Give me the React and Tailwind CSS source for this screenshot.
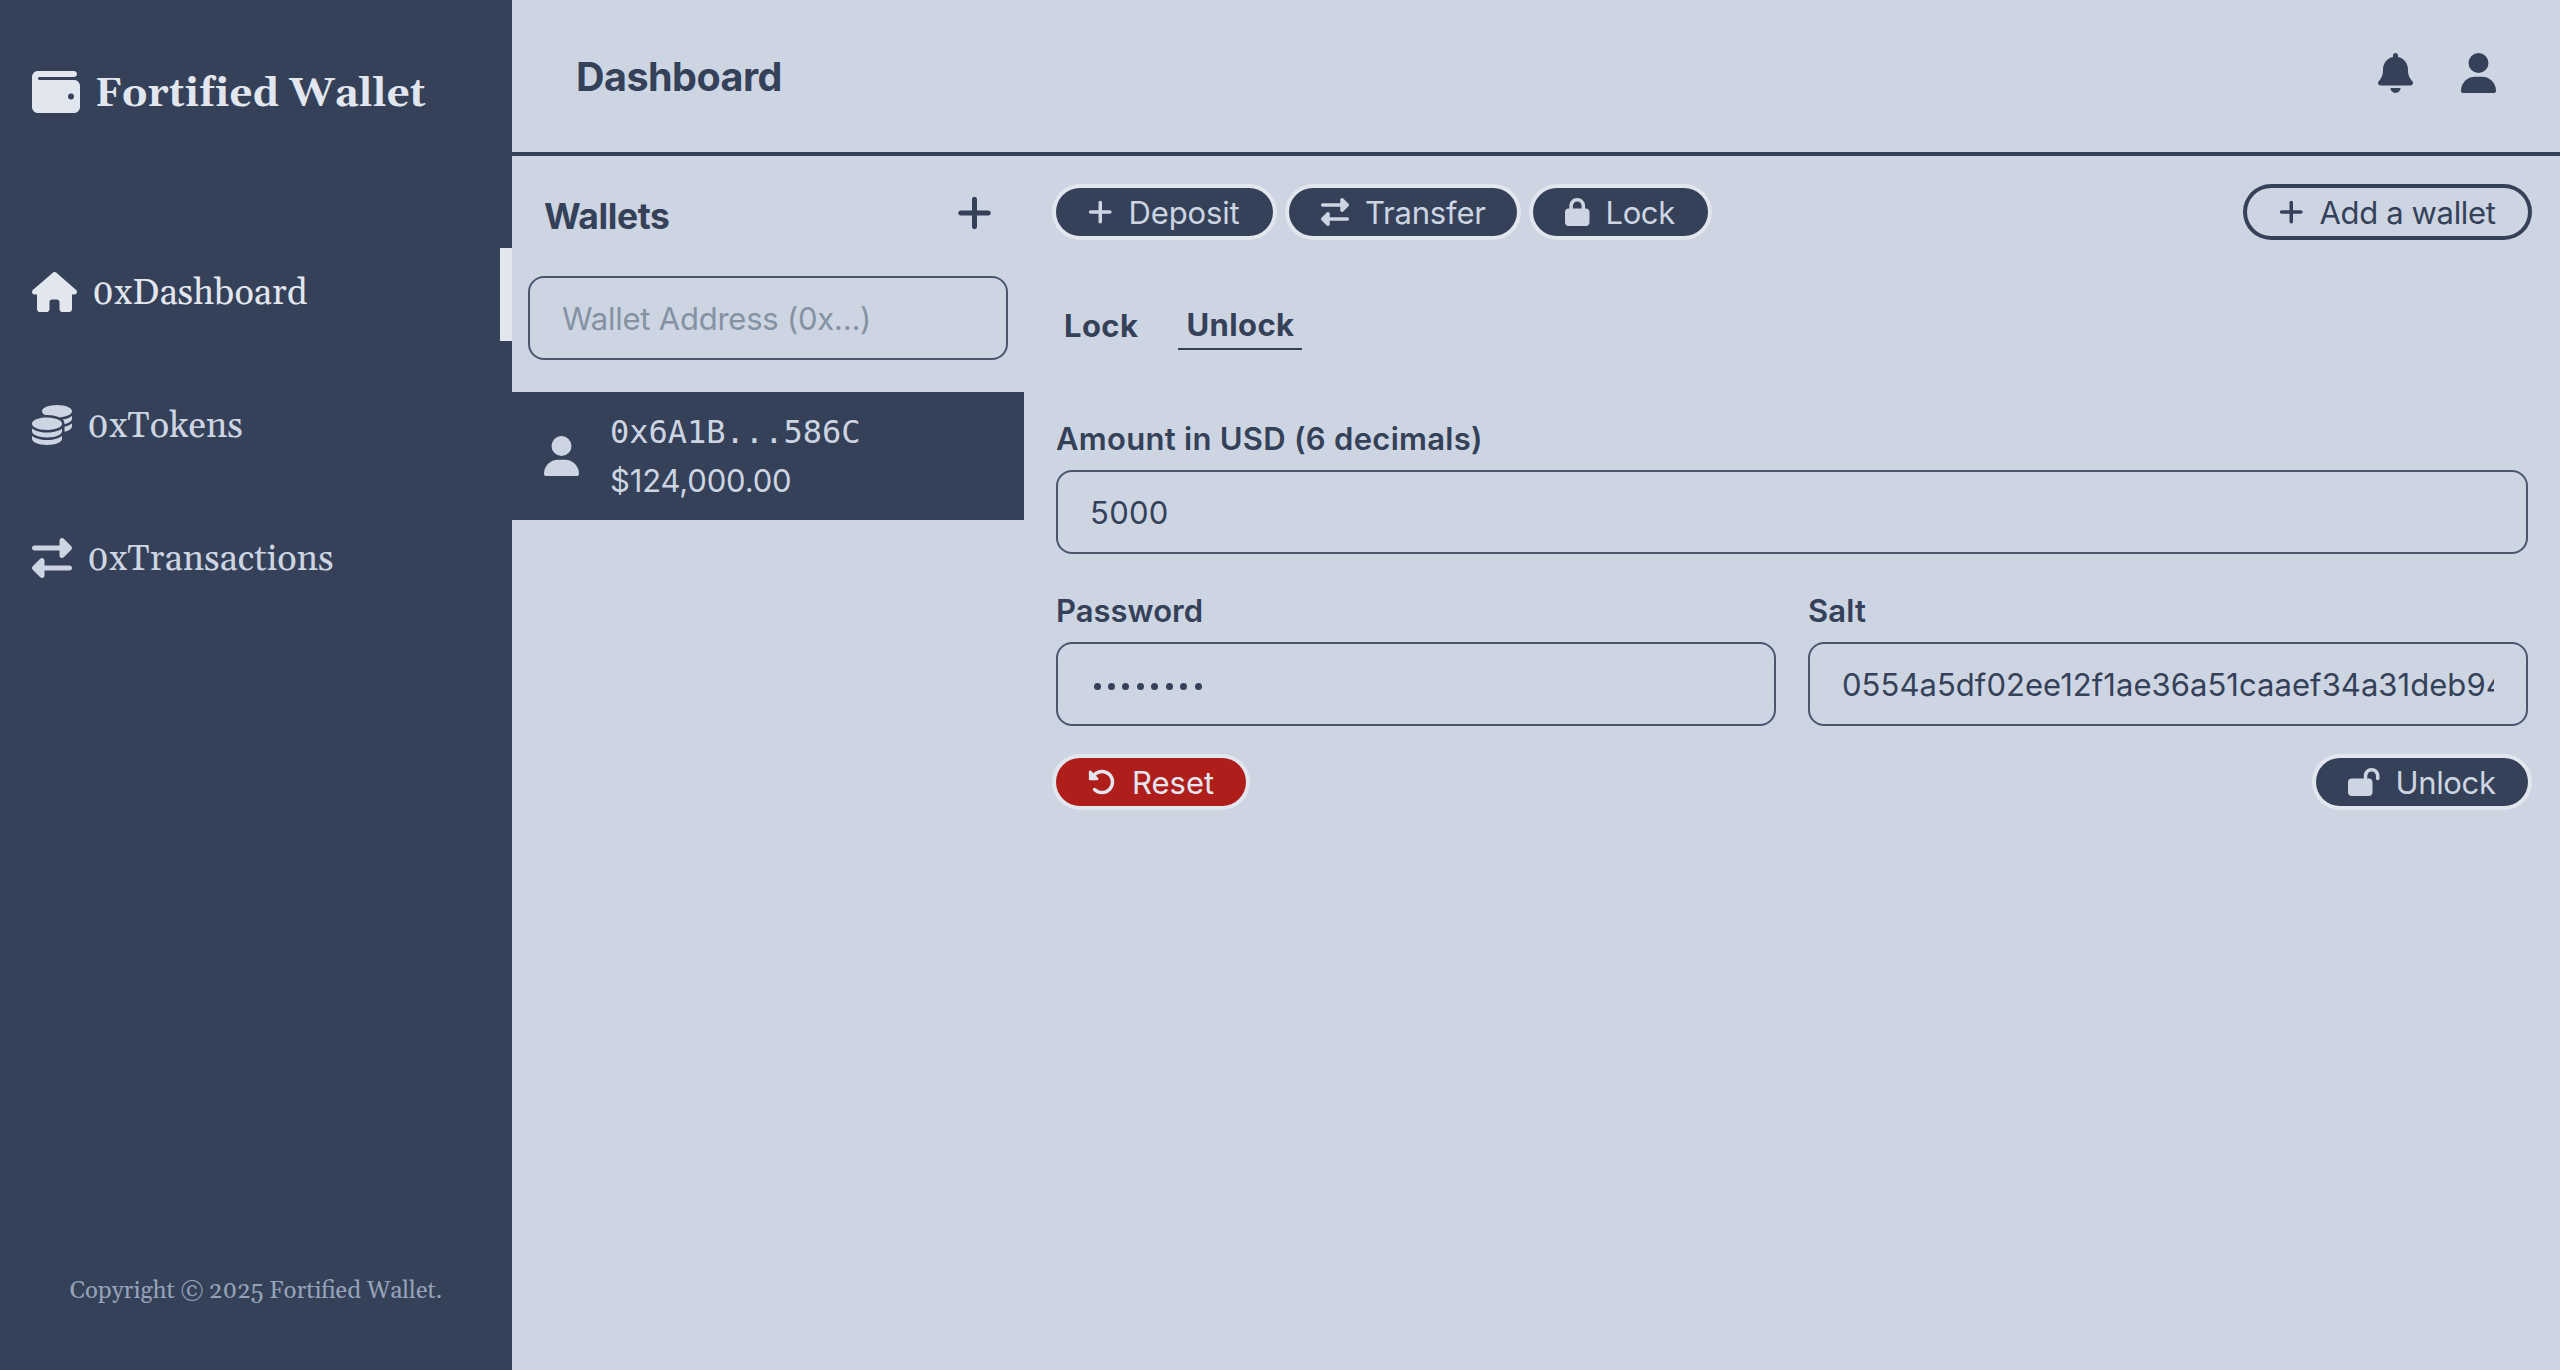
import {
  FaBell,
  FaCoins,
  FaHouse,
  FaLock,
  FaLockOpen,
  FaPlus,
  FaRightLeft,
  FaRotateLeft,
  FaUser,
  FaWallet,
} from "react-icons/fa6";

function NavItem({ icon: Icon, label, active }) {
  return (
    <a
      className={`flex h-[93px] items-center gap-[15px] pb-[5px] pl-8 ${
        active
          ? "border-r-12 border-[#e2e6ef] text-[#e2e6ef]"
          : "text-[#cdd5e2]"
      }`}
    >
      <Icon className={active ? "h-10 w-[45px]" : "size-10"} />
      <span className="pt-[3px] text-[36px] leading-[56px] tracking-[0.05px]">{label}</span>
    </a>
  );
}

function Sidebar() {
  return (
    <aside className="flex w-[512px] shrink-0 flex-col bg-[#354158] font-['Gelasio','Georgia','Liberation_Serif',serif] oldstyle-nums">
      <div className="flex h-[184px] items-center gap-[15px] pl-8 text-[#e2e6ef]">
        <FaWallet className="size-12" />
        <span className="pt-[5px] text-[40px] leading-[56px] font-bold tracking-[0.2px]">Fortified Wallet</span>
      </div>
      <nav className="mt-16 flex flex-col gap-10">
        <NavItem icon={FaHouse} label="0xDashboard" active />
        <NavItem icon={FaCoins} label="0xTokens" />
        <NavItem icon={FaRightLeft} label="0xTransactions" />
      </nav>
      <p className="mt-auto mb-[63px] text-center text-[24px] leading-8 text-[#95a3b9]">
        Copyright © 2025 Fortified Wallet.
      </p>
    </aside>
  );
}

const tones = {
  dark: "bg-[#354158] text-[#cdd5e2] ring-[#e2e6ef]",
  danger: "bg-[#b01e1c] text-[#e2e6ef] ring-[#e2e6ef]",
  outline: "text-[#354158] ring-[#354158]",
};

function Pill({ icon: Icon, iconClass = "w-[24.5px]", tone = "dark", size = "", track = "tracking-[-0.15px]", children }) {
  return (
    <button className={`flex h-12 items-center gap-4 rounded-full px-8 text-[31px] ring-4 ${size} ${track} ${tones[tone]}`}>
      <Icon className={`h-7 shrink-0 ${iconClass}`} />
      <span className="pt-0.5 leading-[44px] whitespace-nowrap">{children}</span>
    </button>
  );
}

function Field({ label, track, children }) {
  return (
    <label className="flex min-w-0 flex-1 flex-col gap-2">
      <span className={`h-12 pt-px text-[31px] leading-[48px] font-semibold ${track}`}>{label}</span>
      <div className="flex h-[84px] items-center rounded-2xl border-2 border-[#4a566e] px-8 text-[31px]">
        {children}
      </div>
    </label>
  );
}

function WalletList() {
  return (
    <section className="w-[512px] shrink-0">
      <div className="flex h-[120px] items-center justify-between px-8">
        <h2 className="pt-0.5 text-[35.5px] font-bold tracking-[-0.42px]">Wallets</h2>
        <FaPlus className="mb-1.5 h-10 w-[35px]" />
      </div>
      <div className="mx-4 flex h-[84px] items-center rounded-2xl border-2 border-[#4a566e] px-8 pt-0.5 text-[31px] tracking-[-0.23px] text-[#8592a3]">
        Wallet Address (0x...)
      </div>
      <div className="mt-8 flex h-32 items-center gap-[31px] bg-[#354158] px-8 text-[#cdd5e2]">
        <FaUser className="h-10 w-[35px]" />
        <div className="leading-[48px]">
          <p className="font-['DejaVu_Sans_Mono',monospace] text-[32px]">0x6A1B...586C</p>
          <p className="h-12 pt-px text-[31px] tracking-[-0.16px]">$124,000.00</p>
        </div>
      </div>
    </section>
  );
}

function UnlockPanel() {
  return (
    <section className="flex min-w-0 flex-1 flex-col p-8">
      <div className="flex gap-4">
        <Pill icon={FaPlus} size="w-[217px]">Deposit</Pill>
        <Pill icon={FaRightLeft} iconClass="w-7" size="w-[228px]" track="tracking-[-0.2px]">Transfer</Pill>
        <Pill icon={FaLock} size="w-[175px]" track="tracking-[-0.4px]">Lock</Pill>
        <div className="ml-auto">
          <Pill icon={FaPlus} tone="outline" size="w-[281px]" track="tracking-[-0.35px]">Add a wallet</Pill>
        </div>
      </div>
      <div className="mt-16 flex h-[50px] items-center gap-8 text-[31px] font-bold tracking-[0.4px]">
        <span className="px-2 pt-px leading-[48px]">Lock</span>
        <span className="border-b-2 border-[#354158] px-2 pt-0.5 leading-[46px]">Unlock</span>
      </div>
      <div className="mt-16 flex">
        <Field label="Amount in USD (6 decimals)" track="tracking-[0.28px]">
          <span className="pt-0.5 tracking-[0.3px]">5000</span>
        </Field>
      </div>
      <div className="mt-8 flex gap-8">
        <Field label="Password">
          <div className="flex gap-[7.45px] pt-1 pl-[3.5px]">
            {Array.from({ length: 8 }, (_, i) => (
              <span key={i} className="size-[7px] rounded-full bg-[#354158]" />
            ))}
          </div>
        </Field>
        <Field label="Salt" track="tracking-[0.16px]">
          <span className="overflow-hidden pt-0.5 whitespace-nowrap tracking-[0.05px]">
            0554a5df02ee12f1ae36a51caaef34a31deb94
          </span>
        </Field>
      </div>
      <div className="mt-8 flex justify-between">
        <Pill icon={FaRotateLeft} iconClass="w-7" tone="danger" size="w-[190px]" track="tracking-[0px]">Reset</Pill>
        <Pill icon={FaLockOpen} iconClass="w-[31.5px]" size="w-[212px]" track="tracking-[-0.35px]">Unlock</Pill>
      </div>
    </section>
  );
}

export default function App() {
  return (
    <div className="flex h-[1370px] w-[2560px] overflow-hidden bg-[#cdd5e2] font-['Inter','Liberation_Sans',sans-serif] text-[#354158]">
      <Sidebar />
      <div className="flex flex-1 flex-col">
        <header className="flex h-[156px] items-center justify-between border-b-4 border-[#354158] px-16">
          <h1 className="pt-[3px] text-[39.5px] font-bold tracking-[-0.53px]">Dashboard</h1>
          <div className="flex gap-12 pb-1.5">
            <FaBell className="h-10 w-[35px]" />
            <FaUser className="h-10 w-[35px]" />
          </div>
        </header>
        <main className="flex flex-1">
          <WalletList />
          <UnlockPanel />
        </main>
      </div>
    </div>
  );
}
